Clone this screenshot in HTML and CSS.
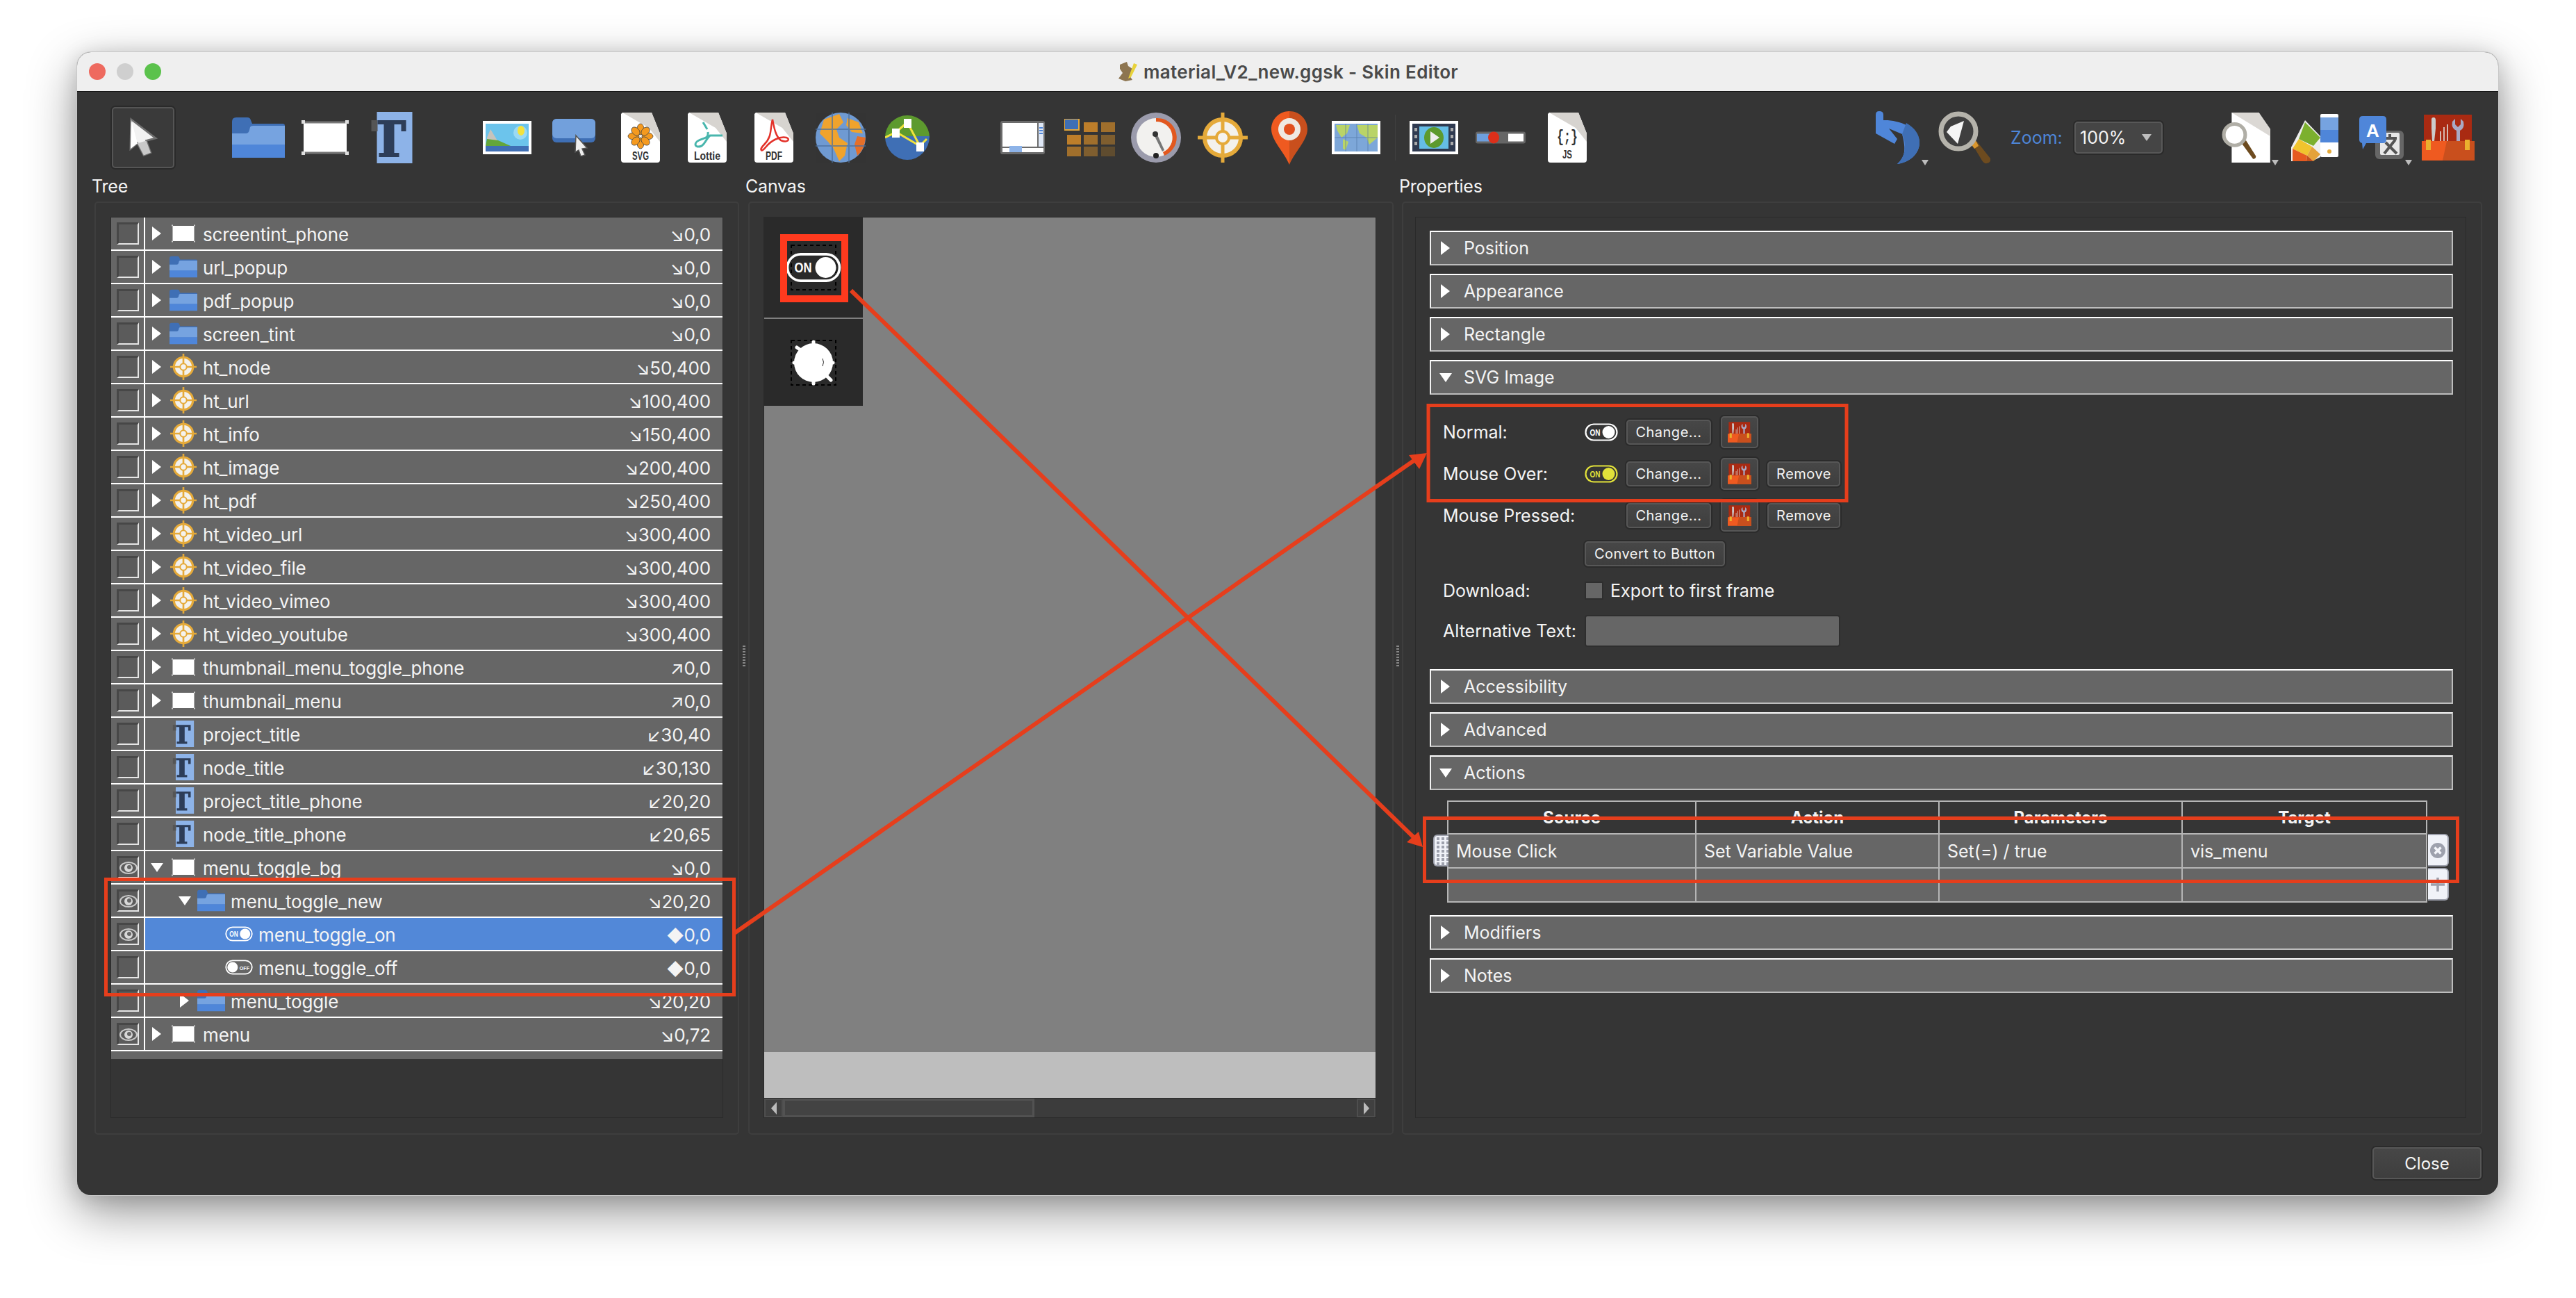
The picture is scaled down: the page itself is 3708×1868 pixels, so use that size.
FILE: index.html
```html
<!DOCTYPE html>
<html lang="en">
<head>
<meta charset="utf-8">
<title>material_V2_new.ggsk - Skin Editor</title>
<link rel="stylesheet" href="styles.css">
</head>
<body>
<svg class="defs" width="0" height="0" aria-hidden="true">
  <defs>
    <symbol id="arrow" viewBox="-3 -3 48 64"><path d="M2 0 L41 30 L26 34 L33 53 L22 57 L12 38 L1 47 Z" fill="#f2f2f2" stroke="#6f6f6f" stroke-width="3"/><path d="M2 0 L12 38 L1 47 Z" fill="#fff"/><path d="M12 38 L22 57 L33 53 L26 34 Z" fill="#c9c9c9"/></symbol>
    <symbol id="folder" viewBox="0 0 76 58"><path d="M0 6 Q0 0 6 0 H22 Q26 0 27 4 L29 9 H73 Q76 9 76 12 V40 H0 Z" fill="#3f6fb5"/><path d="M0 23 H20 Q24 23 25 18 L26 14 Q27 12 30 12 H76 V40 H0 Z" fill="#76a3e0"/><rect y="39" width="76" height="19" fill="#4f86d9"/></symbol>
    <symbol id="rect" viewBox="-6 -5 80 60"><rect x="3" y="3" width="62" height="44" rx="2" fill="#fff"/><path d="M0 0H4V4H0ZM64 0H68V4H64ZM0 46H4V50H0ZM64 46H68V50H64Z" fill="#cfcfcf"/></symbol>
    <symbol id="rect-tall" viewBox="0 0 68 50"><rect x="3" y="2" width="62" height="46" fill="#fff"/><path d="M3 3H65M3 47H65" stroke="#777" stroke-width="3"/><path d="M0 0H5V5H0ZM63 0H68V5H63ZM0 45H5V50H0ZM63 45H68V50H63Z" fill="#ddd"/></symbol>
    <symbol id="text-t" viewBox="0 0 59 74"><rect x="8" width="51" height="74" fill="#8db3e8"/><rect y="12" width="9" height="16" fill="#555"/><path d="M9 12H50V28H43V18H33V59H40V65H11V59H18V18H9Z" fill="#2d3d58"/></symbol>
    <symbol id="picture" viewBox="0 0 70 48"><rect width="70" height="48" fill="#fff"/><rect x="4" y="4" width="62" height="40" fill="#6cc4ec"/><circle cx="54" cy="17" r="10" fill="#9ad9f4"/><ellipse cx="55" cy="14" rx="5" ry="7" fill="#f4e23c"/><path d="M6 24 L11 12 L22 30 L32 36 L6 36Z" fill="#c7c3bc"/><path d="M6 26 L22 28 L40 36 H4Z" fill="#63a63b"/><rect x="4" y="36" width="62" height="8" fill="#3f6fb5"/></symbol>
    <symbol id="hoverbtn" viewBox="0 0 62 54"><rect y="0" width="62" height="34" rx="6" fill="#3f6fb5"/><rect y="0" width="62" height="28" rx="6" fill="#72a0dc"/><path d="M34 24 L50 42 L43 43 L47 52 L41 54 L38 45 L33 48Z" fill="#eee" stroke="#555" stroke-width="1.5"/></symbol>
    <symbol id="doc" viewBox="0 0 56 72"><path d="M2 0 H44 L56 30 V68 Q56 72 52 72 H4 Q0 72 0 68 V2Z" fill="#fff"/><path d="M2 0H44L56 30V42L40 22Z" fill="#d7d4d0"/></symbol>
    <symbol id="globe" viewBox="0 0 72 72"><circle cx="36" cy="36" r="36" fill="#6f9ad2"/><path d="M12 10 L34 2 L40 14 L30 24 L34 36 L46 44 L42 62 L34 70 L26 52 L18 42 L6 30Z" fill="#f0a32e"/><path d="M46 8 L62 14 L68 30 L52 28 L44 18Z" fill="#f0a32e"/><path d="M60 34 L72 36 Q70 54 60 62 L56 46Z" fill="#e5702a"/><path d="M0 24H72M0 48H72M24 0V72M48 0V72" stroke="#4a6f9f" stroke-width="2" opacity=".7"/></symbol>
    <symbol id="net" viewBox="0 0 64 64"><path d="M32 0 A32 32 0 0 1 64 32 L0 32 A32 32 0 0 1 32 0Z" fill="#5d9a2e"/><path d="M0 30 H64 A32 34 0 0 1 0 30Z" fill="#3f6fb5"/><path d="M32 10 L16 24 L50 44 M32 10 L50 44 M16 24 L0 32 M50 44 L60 34" stroke="#f0e23c" stroke-width="3" fill="none"/><rect x="27" y="5" width="11" height="13" fill="#fff"/><rect x="10" y="19" width="11" height="13" fill="#fff"/><rect x="45" y="39" width="11" height="13" fill="#fff"/></symbol>
    <symbol id="panel" viewBox="0 0 64 48"><rect width="64" height="48" rx="3" fill="#6b6b6b"/><rect x="3" y="3" width="50" height="34" fill="#fff"/><rect x="55" y="3" width="7" height="34" fill="#dfe8f6"/><path d="M56 10H61M56 14H61M56 18H61" stroke="#4f86d9" stroke-width="2"/><rect x="3" y="39" width="59" height="6" fill="#fff"/><rect x="13" y="36" width="18" height="9" fill="#8db3e8"/></symbol>
    <symbol id="grid" viewBox="0 0 73 54"><rect x="0" y="0" width="21" height="16" fill="#3f6fb5" stroke="#e7a93a" stroke-width="2"/><rect x="28" y="5" width="20" height="14" fill="#bd7e2a"/><rect x="53" y="5" width="20" height="14" fill="#a06f2c"/><rect x="4" y="23" width="20" height="14" fill="#bd7e2a"/><rect x="28" y="23" width="20" height="14" fill="#a06f2c"/><rect x="53" y="23" width="20" height="14" fill="#7f5e2f"/><rect x="4" y="40" width="20" height="14" fill="#a06f2c"/><rect x="28" y="40" width="20" height="14" fill="#7f5e2f"/><rect x="53" y="40" width="20" height="14" fill="#5f4c2f"/></symbol>
    <symbol id="gauge" viewBox="0 0 72 72"><circle cx="36" cy="36" r="36" fill="#9b9bac"/><circle cx="36" cy="36" r="28" fill="#f2f1ef"/><path d="M36 8 A28 28 0 0 1 48 62 L46 57 A23 23 0 0 0 36 13Z" fill="#e2581f"/><path d="M33 32 L37 30 L48 54 L45 56Z" fill="#777"/><circle cx="35" cy="31" r="4" fill="#333"/><circle cx="36" cy="62" r="4" fill="#222"/></symbol>
    <symbol id="hotspot" viewBox="0 0 72 72"><circle cx="36" cy="36" r="26" fill="#f3f1ec" stroke="#e5aa3a" stroke-width="6"/><path d="M36 0V72M0 36H72" stroke="#e5aa3a" stroke-width="5"/><circle cx="36" cy="36" r="9" fill="#f5f3ee" stroke="#e5aa3a" stroke-width="4"/></symbol>
    <symbol id="pin" viewBox="0 0 52 77"><path d="M26 0 C12 0 0 11 0 26 C0 42 18 58 26 77 Z" fill="#ef5a20"/><path d="M26 0 C40 0 52 11 52 26 C52 42 34 58 26 77 Z" fill="#c94f1d"/><circle cx="26" cy="26" r="16" fill="#efe9e2"/><circle cx="26" cy="26" r="8" fill="#e2501e"/></symbol>
    <symbol id="map" viewBox="0 0 70 48"><rect width="70" height="48" fill="#fff"/><rect x="4" y="4" width="62" height="40" fill="#7da7d9"/><path d="M6 6 H26 L22 18 L14 24 L8 14Z M16 26 L24 30 L20 42 L16 40Z M36 6 H66 V24 L54 34 L50 24 L40 18Z" fill="#b9d468"/><path d="M4 24H66M20 4V44M36 4V44M52 4V44" stroke="#4a6f9f" stroke-width="1" opacity=".6"/></symbol>
    <symbol id="video" viewBox="0 0 70 48"><rect width="70" height="48" fill="#fff"/><rect x="4" y="4" width="62" height="40" fill="#2f3a50"/><rect x="14" y="8" width="42" height="32" fill="#65bde5"/><ellipse cx="35" cy="24" rx="14" ry="15" fill="#5d9a2e"/><path d="M30 15 L43 24 L30 33Z" fill="#eee"/><path d="M9 10V15M9 20V25M9 30V35M61 10V15M61 20V25M61 30V35" stroke="#aaa" stroke-width="4"/></symbol>
    <symbol id="slider" viewBox="0 0 72 17"><rect width="72" height="17" rx="3" fill="#666"/><rect x="2" y="3" width="20" height="11" fill="#6e9fdd"/><rect x="47" y="3" width="22" height="11" fill="#fff"/><ellipse cx="26" cy="8.500" rx="8" ry="8.500" fill="#dc2f1a"/></symbol>
    <symbol id="undo" viewBox="0 0 64 76"><path d="M0 5 Q0 0 5 0 Q11 0 11 5 L11 13 C30 12 63 22 63 45 C63 62 48 74 31 76 C42 66 44 56 38 33 L19 25 L31 40 L27 47 L0 32Z" fill="#4f86d9"/><path d="M44 17 C56 24 63 33 63 45 C63 62 48 74 31 76 C42 66 46 50 38 33Z" fill="#3f6fb5"/></symbol>
    <symbol id="lens" viewBox="0 0 76 76"><path d="M48 46 L56 44 L75 68 Q76 74 70 75 Q66 76 63 71Z" fill="#6d4b1f"/><path d="M46 46 L54 42 L58 50 L52 54Z" fill="#d9962d"/><circle cx="29" cy="29" r="25" fill="#3f3f3f" stroke="#b5b3ab" stroke-width="7"/><path d="M37 14 L28 47 L12 30 L18 22Z" fill="#f5f5f5"/></symbol>
    <symbol id="docsearch" viewBox="0 0 74 72"><path d="M14 1 H52 L68 24 V71 H14 Z" fill="#fff"/><path d="M14 1H52L68 24V34Z" fill="#dbd8d4"/><path d="M28 44 L34 40 L48 62 Q48 66 44 66Z" fill="#6d4b1f"/><circle cx="18" cy="32" r="15" fill="#fff" stroke="#b0aea6" stroke-width="5"/></symbol>
    <symbol id="palette" viewBox="0 0 68 68"><rect x="42" y="0" width="26" height="62" rx="2" fill="#fff"/><rect x="42" y="5" width="26" height="18" fill="#76a3e0"/><rect x="42" y="23" width="26" height="18" fill="#4f86d9"/><circle cx="55" cy="54" r="3" fill="#e5aa3a"/><path d="M20 9 L42 32 L42 62 L30 68 L0 68 L0 48Z" fill="#eee"/><path d="M20 12 L42 34 L32 46 L11 36Z" fill="#7cb02e"/><path d="M11 36 L30 47 L23 60 L2 50Z" fill="#f0c42e"/><path d="M30 47 L42 58 L32 68 L23 60Z" fill="#e5a23a"/><path d="M2 50 L23 60 L22 68 H2Z" fill="#e65a20"/><path d="M23 60 L32 68 H22Z" fill="#c14f1d"/></symbol>
    <symbol id="translate" viewBox="0 0 64 62"><rect x="23" y="21" width="41" height="41" rx="6" fill="#666"/><rect x="30" y="24" width="28" height="32" rx="2" fill="#e8e8e8"/><path d="M34 32H54M44 26V33M36 54L52 34M38 38L54 54" stroke="#555" stroke-width="4" fill="none"/><path d="M5 0H34Q39 0 39 5V34Q39 39 34 39H10L5 48L4 39Q0 38 0 34V5Q0 0 5 0Z" fill="#4f86d9"/><text x="19.500" y="30" class="trans-a">A</text></symbol>
    <symbol id="toolbox" viewBox="0 0 76 66"><rect x="3" width="69" height="40" fill="#a92a12"/><path d="M14 7 Q14 4 17 4 Q20 4 20 8 L20 20 L18 38 H15 L14 20Z" fill="#ccc"/><path d="M27 38V24M32 38V18M37 38V14" stroke="#d6b9b0" stroke-width="2"/><path d="M48 6 L48 14 L52 18 L56 14 V6 L60 10 Q62 20 55 23 V38 H50 V23 Q42 20 44 10Z" fill="#a9a9c4"/><rect y="38" width="76" height="28" fill="#ef5a20"/><path d="M36 38H76V66H30Z" fill="#c94f1d"/><rect x="6" y="36" width="7" height="15" fill="#eab02e"/><rect x="62" y="36" width="7" height="15" fill="#eab02e"/></symbol>
    <symbol id="toggle-on" viewBox="0 0 48 26"><rect x="1.500" y="1.500" width="45" height="23" rx="11.500" fill="none" stroke="currentColor" stroke-width="2.200"/><text x="7.500" y="17.500" class="tog-t" textLength="15" lengthAdjust="spacingAndGlyphs">ON</text><circle cx="34.500" cy="13" r="9" fill="currentColor"/></symbol>
    <symbol id="toggle-off" viewBox="0 0 48 26"><rect x="1.500" y="1.500" width="45" height="23" rx="11.500" fill="none" stroke="currentColor" stroke-width="2.200"/><text x="25" y="17.500" class="tog-o" textLength="17" lengthAdjust="spacingAndGlyphs">OFF</text><circle cx="13" cy="13" r="9" fill="currentColor"/></symbol>
    <symbol id="eye" viewBox="0 0 26 18"><ellipse cx="13" cy="9" rx="12" ry="8" fill="none" stroke="#c9c9c9" stroke-width="2"/><circle cx="13" cy="9" r="6" fill="#d8d8d8"/><circle cx="14" cy="8" r="3" fill="#666"/></symbol>
  </defs>
</svg>

<div class="window">
  <header class="titlebar">
    <div class="lights"><span class="light red"></span><span class="light grey"></span><span class="light green"></span></div>
    <div class="title">
      <svg class="title-icon" viewBox="0 0 30 28"><path d="M4 4 L14 0 L16 6 L22 10 L18 20 L22 26 L12 28 L2 24 L8 16 L4 10Z" fill="#8d7550"/><path d="M24 2 L29 4 L20 22 L16 24Z" fill="#e8d23a"/></svg>
      <span>material_V2_new.ggsk - Skin Editor</span>
    </div>
    <div></div>
  </header>

  <div class="toolbar">
    <button class="select-btn"><svg class="sel-ico"><use href="#arrow"/></svg></button>
    <div class="tools g2">
      <span class="tool"><svg class="i76"><use href="#folder"/></svg></span>
      <span class="tool"><svg class="i68"><use href="#rect-tall"/></svg></span>
      <span class="tool"><svg class="i60"><use href="#text-t"/></svg></span>
    </div>
    <div class="tools g3">
      <span class="tool"><svg class="i70"><use href="#picture"/></svg></span>
      <span class="tool"><svg class="i62"><use href="#hoverbtn"/></svg></span>
      <span class="tool"><svg class="idoc" viewBox="0 0 56 72"><use href="#doc" width="56" height="72"/><g class="flower"><ellipse cx="28" cy="24" rx="5" ry="8"/><ellipse cx="28" cy="44" rx="5" ry="8"/><ellipse cx="18" cy="34" rx="8" ry="5"/><ellipse cx="38" cy="34" rx="8" ry="5"/><ellipse cx="21" cy="27" rx="5" ry="7" transform="rotate(-45 21 27)"/><ellipse cx="35" cy="27" rx="5" ry="7" transform="rotate(45 35 27)"/><ellipse cx="21" cy="41" rx="5" ry="7" transform="rotate(45 21 41)"/><ellipse cx="35" cy="41" rx="5" ry="7" transform="rotate(-45 35 41)"/></g><text x="28" y="68" class="doc-t" textLength="24" lengthAdjust="spacingAndGlyphs">SVG</text></svg></span>
      <span class="tool"><svg class="idoc" viewBox="0 0 56 72"><use href="#doc" width="56" height="72"/><path class="lot" d="M22 14 L28 24 M29 28 C30 38 24 36 16 40 C8 44 10 52 20 48 C26 44 26 38 32 33 H50" /><text x="28" y="68" class="doc-t" textLength="38" lengthAdjust="spacingAndGlyphs">Lottie</text></svg></span>
      <span class="tool"><svg class="idoc" viewBox="0 0 56 72"><use href="#doc" width="56" height="72"/><path class="acro" d="M26 10 C22 24 26 34 14 46 C6 54 10 58 16 50 C24 40 36 34 46 36 C52 38 48 44 38 40 C30 34 28 20 26 10Z" /><text x="28" y="68" class="doc-t" textLength="24" lengthAdjust="spacingAndGlyphs">PDF</text></svg></span>
      <span class="tool"><svg class="i72"><use href="#globe"/></svg></span>
      <span class="tool"><svg class="i64"><use href="#net"/></svg></span>
    </div>
    <div class="tools g4">
      <span class="tool"><svg class="i64"><use href="#panel"/></svg></span>
      <span class="tool"><svg class="i73"><use href="#grid"/></svg></span>
      <span class="tool"><svg class="i72"><use href="#gauge"/></svg></span>
      <span class="tool"><svg class="i72"><use href="#hotspot"/></svg></span>
      <span class="tool"><svg class="ipin"><use href="#pin"/></svg></span>
      <span class="tool"><svg class="i70"><use href="#map"/></svg></span>
      <span class="tool-sep"></span>
      <span class="tool"><svg class="i70"><use href="#video"/></svg></span>
      <span class="tool"><svg class="i72"><use href="#slider"/></svg></span>
      <span class="tool"><svg class="idoc" viewBox="0 0 56 72"><use href="#doc" width="56" height="72"/><text x="28" y="42" class="js-b" textLength="30" lengthAdjust="spacingAndGlyphs">{;}</text><text x="28" y="66" class="doc-t" textLength="14" lengthAdjust="spacingAndGlyphs">JS</text></svg></span>
    </div>
    <div class="tools g5">
      <span class="tool has-menu"><svg class="iundo"><use href="#undo"/></svg></span>
      <span class="tool"><svg class="ilens"><use href="#lens"/></svg></span>
    </div>
    <span class="zoom-label">Zoom:</span>
    <div class="combo"><span>100%</span><i class="combo-arrow"></i></div>
    <div class="tools g6">
      <span class="tool has-menu"><svg class="ilens"><use href="#docsearch"/></svg></span>
      <span class="tool"><svg class="i68"><use href="#palette"/></svg></span>
      <span class="tool has-menu"><svg class="itrans"><use href="#translate"/></svg></span>
      <span class="tool"><svg class="ilens"><use href="#toolbox"/></svg></span>
    </div>
  </div>

  <div class="panels">
    <section class="panel">
      <h2 class="panel-title">Tree</h2>
      <div class="group">
        <div class="frame tree">
          <div class="row"><span class="vis"><span class="check"></span></span><span class="name"><i class="tri"></i><svg class="ti"><use href="#rect"/></svg><span class="label">screentint_phone</span><span class="val">↘0,0</span></span></div>
          <div class="row"><span class="vis"><span class="check"></span></span><span class="name"><i class="tri"></i><svg class="ti"><use href="#folder"/></svg><span class="label">url_popup</span><span class="val">↘0,0</span></span></div>
          <div class="row"><span class="vis"><span class="check"></span></span><span class="name"><i class="tri"></i><svg class="ti"><use href="#folder"/></svg><span class="label">pdf_popup</span><span class="val">↘0,0</span></span></div>
          <div class="row"><span class="vis"><span class="check"></span></span><span class="name"><i class="tri"></i><svg class="ti"><use href="#folder"/></svg><span class="label">screen_tint</span><span class="val">↘0,0</span></span></div>
          <div class="row"><span class="vis"><span class="check"></span></span><span class="name"><i class="tri"></i><svg class="ti"><use href="#hotspot"/></svg><span class="label">ht_node</span><span class="val">↘50,400</span></span></div>
          <div class="row"><span class="vis"><span class="check"></span></span><span class="name"><i class="tri"></i><svg class="ti"><use href="#hotspot"/></svg><span class="label">ht_url</span><span class="val">↘100,400</span></span></div>
          <div class="row"><span class="vis"><span class="check"></span></span><span class="name"><i class="tri"></i><svg class="ti"><use href="#hotspot"/></svg><span class="label">ht_info</span><span class="val">↘150,400</span></span></div>
          <div class="row"><span class="vis"><span class="check"></span></span><span class="name"><i class="tri"></i><svg class="ti"><use href="#hotspot"/></svg><span class="label">ht_image</span><span class="val">↘200,400</span></span></div>
          <div class="row"><span class="vis"><span class="check"></span></span><span class="name"><i class="tri"></i><svg class="ti"><use href="#hotspot"/></svg><span class="label">ht_pdf</span><span class="val">↘250,400</span></span></div>
          <div class="row"><span class="vis"><span class="check"></span></span><span class="name"><i class="tri"></i><svg class="ti"><use href="#hotspot"/></svg><span class="label">ht_video_url</span><span class="val">↘300,400</span></span></div>
          <div class="row"><span class="vis"><span class="check"></span></span><span class="name"><i class="tri"></i><svg class="ti"><use href="#hotspot"/></svg><span class="label">ht_video_file</span><span class="val">↘300,400</span></span></div>
          <div class="row"><span class="vis"><span class="check"></span></span><span class="name"><i class="tri"></i><svg class="ti"><use href="#hotspot"/></svg><span class="label">ht_video_vimeo</span><span class="val">↘300,400</span></span></div>
          <div class="row"><span class="vis"><span class="check"></span></span><span class="name"><i class="tri"></i><svg class="ti"><use href="#hotspot"/></svg><span class="label">ht_video_youtube</span><span class="val">↘300,400</span></span></div>
          <div class="row"><span class="vis"><span class="check"></span></span><span class="name"><i class="tri"></i><svg class="ti"><use href="#rect"/></svg><span class="label">thumbnail_menu_toggle_phone</span><span class="val">↗0,0</span></span></div>
          <div class="row"><span class="vis"><span class="check"></span></span><span class="name"><i class="tri"></i><svg class="ti"><use href="#rect"/></svg><span class="label">thumbnail_menu</span><span class="val">↗0,0</span></span></div>
          <div class="row"><span class="vis"><span class="check"></span></span><span class="name"><i class="tri none"></i><svg class="ti"><use href="#text-t"/></svg><span class="label">project_title</span><span class="val">↙30,40</span></span></div>
          <div class="row"><span class="vis"><span class="check"></span></span><span class="name"><i class="tri none"></i><svg class="ti"><use href="#text-t"/></svg><span class="label">node_title</span><span class="val">↙30,130</span></span></div>
          <div class="row"><span class="vis"><span class="check"></span></span><span class="name"><i class="tri none"></i><svg class="ti"><use href="#text-t"/></svg><span class="label">project_title_phone</span><span class="val">↙20,20</span></span></div>
          <div class="row"><span class="vis"><span class="check"></span></span><span class="name"><i class="tri none"></i><svg class="ti"><use href="#text-t"/></svg><span class="label">node_title_phone</span><span class="val">↙20,65</span></span></div>
          <div class="row"><span class="vis"><span class="check"><svg class="eye"><use href="#eye"/></svg></span></span><span class="name"><i class="tri open"></i><svg class="ti"><use href="#rect"/></svg><span class="label">menu_toggle_bg</span><span class="val">↘0,0</span></span></div>
          <div class="row"><span class="vis"><span class="check"><svg class="eye"><use href="#eye"/></svg></span></span><span class="name d1"><i class="tri open"></i><svg class="ti"><use href="#folder"/></svg><span class="label">menu_toggle_new</span><span class="val">↘20,20</span></span></div>
          <div class="row selected"><span class="vis"><span class="check"><svg class="eye"><use href="#eye"/></svg></span></span><span class="name d2"><i class="tri none"></i><svg class="ti white"><use href="#toggle-on"/></svg><span class="label">menu_toggle_on</span><span class="val"><span class="diamond">◆</span>0,0</span></span></div>
          <div class="row"><span class="vis"><span class="check"></span></span><span class="name d2"><i class="tri none"></i><svg class="ti white"><use href="#toggle-off"/></svg><span class="label">menu_toggle_off</span><span class="val"><span class="diamond">◆</span>0,0</span></span></div>
          <div class="row"><span class="vis"><span class="check"></span></span><span class="name d1"><i class="tri"></i><svg class="ti"><use href="#folder"/></svg><span class="label">menu_toggle</span><span class="val">↘20,20</span></span></div>
          <div class="row"><span class="vis"><span class="check"><svg class="eye"><use href="#eye"/></svg></span></span><span class="name"><i class="tri"></i><svg class="ti"><use href="#rect"/></svg><span class="label">menu</span><span class="val">↘0,72</span></span></div>
          <div class="tree-fill"></div>
        </div>
      </div>
    </section>

    <div class="splitter"><span class="grip"></span></div>

    <section class="panel">
      <h2 class="panel-title">Canvas</h2>
      <div class="group canvas-group">
        <div class="frame stage-frame">
          <div class="stage">
            <div class="strip">
              <div class="strip-cell first">
                <svg class="stage-ico" viewBox="0 0 82 66"><rect class="dash" x="9" y="1" width="64" height="64"/><use href="#toggle-on" x="1" y="11" width="80" height="44"/></svg>
              </div>
              <div class="strip-cell second">
                <svg class="stage-ico" viewBox="0 0 82 66"><rect class="dash" x="9" y="1" width="64" height="64"/><circle cx="41" cy="33" r="28" fill="#fff"/><path d="M41 3V8M41 58V63M13 33H16M66 33H69M17 11L23 15M60 52L66 58" stroke="#fff" stroke-width="5" stroke-linecap="round"/><path d="M54 27Q57 32 54 38" stroke="#222" stroke-width="1" fill="none"/></svg>
              </div>
            </div>
          </div>
          <div class="stage-bottom"></div>
          <div class="hscroll">
            <span class="sb-btn"><i class="sb-l"></i></span>
            <span class="sb-thumb"></span>
            <span class="sb-rest"></span>
            <span class="sb-btn"><i class="sb-r"></i></span>
          </div>
        </div>
      </div>
    </section>

    <div class="splitter"><span class="grip"></span></div>

    <section class="panel">
      <h2 class="panel-title">Properties</h2>
      <div class="group props-group">
        <div class="frame props">
          <div class="sec"><i class="tri"></i><span>Position</span></div>
          <div class="sec"><i class="tri"></i><span>Appearance</span></div>
          <div class="sec"><i class="tri"></i><span>Rectangle</span></div>
          <div class="sec"><i class="tri open"></i><span>SVG Image</span></div>
          <div class="svg-body">
            <div class="prop-row">
              <span class="prop-label">Normal:</span>
              <span class="thumb"><svg class="thumb-ico white"><use href="#toggle-on"/></svg></span>
              <button class="btn change">Change...</button>
              <button class="btn icon-btn"><svg class="tb-ico"><use href="#toolbox"/></svg></button>
            </div>
            <div class="prop-row">
              <span class="prop-label">Mouse Over:</span>
              <span class="thumb"><svg class="thumb-ico yellow"><use href="#toggle-on"/></svg></span>
              <button class="btn change">Change...</button>
              <button class="btn icon-btn"><svg class="tb-ico"><use href="#toolbox"/></svg></button>
              <button class="btn remove">Remove</button>
            </div>
            <div class="prop-row">
              <span class="prop-label">Mouse Pressed:</span>
              <span class="thumb"></span>
              <button class="btn change">Change...</button>
              <button class="btn icon-btn"><svg class="tb-ico"><use href="#toolbox"/></svg></button>
              <button class="btn remove">Remove</button>
            </div>
            <div class="prop-row convert-row">
              <span class="prop-label"></span>
              <button class="btn convert">Convert to Button</button>
            </div>
            <div class="prop-row download-row">
              <span class="prop-label">Download:</span>
              <span class="box"></span>
              <span class="box-text">Export to first frame</span>
            </div>
            <div class="prop-row">
              <span class="prop-label">Alternative Text:</span>
              <span class="input"></span>
            </div>
          </div>
          <div class="sec"><i class="tri"></i><span>Accessibility</span></div>
          <div class="sec"><i class="tri"></i><span>Advanced</span></div>
          <div class="sec"><i class="tri open"></i><span>Actions</span></div>
          <div class="actions-body">
            <div class="table-wrap">
              <table class="actions">
                <thead><tr><th>Source</th><th>Action</th><th>Parameters</th><th>Target</th></tr></thead>
                <tbody>
                  <tr><td>Mouse Click</td><td>Set Variable Value</td><td>Set(=) / true</td><td>vis_menu</td></tr>
                  <tr class="empty"><td></td><td></td><td></td><td></td></tr>
                </tbody>
              </table>
              <span class="drag-handle"></span>
              <span class="row-btn del"><svg class="del-ico" viewBox="0 0 24 24"><circle cx="12" cy="12" r="11" fill="#9ea1ad"/><path d="M7.500 7.500L16.500 16.500M16.500 7.500L7.500 16.500" stroke="#f4f5fa" stroke-width="3.500"/></svg></span>
              <span class="row-btn add"><svg class="del-ico" viewBox="0 0 24 24"><path d="M12 2V22M2 12H22" stroke="#9ea1ad" stroke-width="3.500"/></svg></span>
            </div>
          </div>
          <div class="sec"><i class="tri"></i><span>Modifiers</span></div>
          <div class="sec"><i class="tri"></i><span>Notes</span></div>
        </div>
      </div>
    </section>
  </div>

  <footer class="footer"><button class="btn close">Close</button></footer>
</div>

<svg class="notes" viewBox="0 0 3708 1868" aria-hidden="true">
  <rect class="note-thick" x="1128" y="342" width="88" height="88"/>
  <rect class="note" x="152.500" y="1265.500" width="904" height="166"/>
  <rect class="note" x="2056" y="583.500" width="602" height="137"/>
  <rect class="note" x="2050.500" y="1177.500" width="1487" height="91"/>
  <line class="note-line" x1="1225" y1="418" x2="2037" y2="1207"/>
  <path class="note-head" d="M2048 1219 L2025 1212 L2042 1197Z"/>
  <line class="note-line" x1="1057" y1="1343" x2="2035" y2="663"/>
  <path class="note-head" d="M2054 652 L2028 655 L2043 675Z"/>
</svg>
</body>
</html>
```

FILE: styles.css
```css
* { box-sizing: border-box; }
html, body { margin: 0; padding: 0; }
body {
  width: 3708px;
  height: 1868px;
  background: #fff;
  overflow: hidden;
  padding: 75px 112px 0 111px;
  position: relative;
  font-family: Inter, "Liberation Sans", sans-serif;
  color: #f4f4f4;
}
.defs { position: absolute; }
button { font-family: inherit; color: inherit; padding: 0; }

.window {
  width: 3485px;
  height: 1645px;
  background: #353535;
  border-radius: 20px;
  box-shadow: 0 0 0 1px #c8c8c8, 0 24px 70px rgba(0,0,0,.42), 0 4px 30px rgba(0,0,0,.14);
  display: flex;
  flex-direction: column;
  overflow: hidden;
}

/* title bar */
.titlebar {
  height: 57px;
  flex: none;
  background: #efefef;
  border-bottom: 1px solid #111;
  display: grid;
  grid-template-columns: 1fr auto 1fr;
  align-items: center;
}
.lights { display: flex; gap: 16px; padding-left: 17px; }
.light { width: 24px; height: 24px; border-radius: 50%; }
.red { background: #ee6a5f; }
.grey { background: #cfcfcf; }
.green { background: #5bc24c; }
.title { display: flex; align-items: center; gap: 8px; color: #4a4a4a; font-size: 26px; font-weight: 600; letter-spacing: .35px; white-space: nowrap; }
.title-icon { width: 30px; height: 28px; }

/* toolbar */
.toolbar { height: 122px; flex: none; padding: 10px 0 0 50px; display: flex; align-items: center; }
.select-btn { width: 90px; height: 88px; background: #3a3a3a; border: 2px solid #555; border-radius: 5px; box-shadow: 0 0 0 2px #2a2a2a; display: flex; align-items: center; justify-content: center; }
.sel-ico { width: 44px; height: 58px; }
.tools { display: flex; align-items: center; }
.g2 { margin-left: 73px; }
.g3 { margin-left: 70px; }
.g4 { margin-left: 70px; }
.g5 { margin-left: 380px; }
.g6 { margin-left: 75px; }
.tool { width: 96px; height: 80px; display: flex; align-items: center; justify-content: center; position: relative; }
.tool-sep { width: 16px; height: 66px; position: relative; }
.tool-sep::before { content: ""; position: absolute; left: 8px; top: 0; bottom: 0; width: 1px; background: #3f3f3f; }
.has-menu::after { content: ""; position: absolute; right: 4px; bottom: 0; border-top: 8px solid #bdbdbd; border-left: 5px solid transparent; border-right: 5px solid transparent; }
.i60 { width: 60px; height: 74px; }
.i62 { width: 62px; height: 54px; }
.i64 { width: 64px; height: 64px; }
.i68 { width: 68px; height: 68px; }
.i70 { width: 70px; height: 48px; }
.i72 { width: 72px; height: 72px; }
.i73 { width: 73px; height: 54px; }
.i76 { width: 76px; height: 58px; }
.idoc { width: 56px; height: 72px; }
.ipin { width: 52px; height: 77px; }
.iundo { width: 64px; height: 76px; }
.ilens { width: 76px; height: 76px; }
.itrans { width: 64px; height: 62px; }
.flower ellipse { fill: #f59a1f; stroke: #444; stroke-width: .8; }
.lot { fill: none; stroke: #49b6ad; stroke-width: 3; }
.acro { fill: none; stroke: #e3322a; stroke-width: 2.500; }
.doc-t { font: 700 17px "Liberation Sans", sans-serif; fill: #333; text-anchor: middle; }
.js-b { font: 700 24px "Liberation Mono", monospace; fill: #333; text-anchor: middle; }
.trans-a { font: 700 26px "Liberation Sans", sans-serif; fill: #fff; text-anchor: middle; }
.zoom-label { margin-left: 18px; width: 92px; color: #4e86d8; font-size: 25px; }
.combo { width: 127px; height: 46px; background: #454545; border: 2px solid #585858; border-radius: 5px; box-shadow: 0 0 0 2px #2a2a2a; display: flex; align-items: center; justify-content: space-between; padding: 0 14px 0 6px; font-size: 25px; }
.combo-arrow { border-top: 10px solid #bdbdbd; border-left: 7px solid transparent; border-right: 7px solid transparent; }

/* panels */
.panels { display: grid; grid-template-columns: 928px 13px 929px 12px 1555px; padding-left: 25px; flex: none; }
.panel { display: flex; flex-direction: column; }
.panel-title { margin: 0 0 0 -4px; height: 28px; line-height: 28px; font-size: 25px; font-weight: 400; letter-spacing: -.2px; }
.group { margin-top: 8px; height: 1343px; border: 2px solid #3e3e3e; border-radius: 5px; padding: 21px 22px 23px; }
.canvas-group { padding-left: 21px; padding-right: 24px; }
.props-group { padding-left: 18px; padding-right: 22px; }
.frame { height: 100%; background: #353535; box-shadow: 0 0 0 1px #2a2a2a; }
.splitter { display: flex; align-items: center; justify-content: center; padding-bottom: 34px; padding-top: 36px; }
.grip { width: 4px; height: 32px; background: repeating-linear-gradient(to bottom, #888 0 2px, transparent 2px 4px); }

/* tree */
.row { height: 48px; display: flex; background: #666; border-bottom: 2px solid #fff; }
.vis { width: 49px; flex: none; border-right: 2px solid #fff; padding-left: 8px; display: flex; align-items: center; }
.check { width: 32px; height: 32px; background: #5b5b5b; border-style: solid; border-width: 3px 2px 2px 3px; border-color: #474747 #e6e6e6 #e6e6e6 #474747; display: flex; align-items: center; justify-content: center; }
.eye { width: 26px; height: 18px; }
.name { flex: 1; display: flex; align-items: center; padding-right: 17px; min-width: 0; }
.d1 { padding-left: 40px; }
.d2 { padding-left: 80px; }
.selected .name { background: #5288d8; }
.tri { width: 19px; margin-left: 7px; height: 20px; flex: none; display: flex; align-items: center; justify-content: center; }
.tri::before { content: ""; border-left: 13px solid #fff; border-top: 10px solid transparent; border-bottom: 10px solid transparent; }
.tri.open::before { border-left: 9px solid transparent; border-right: 9px solid transparent; border-top: 13px solid #fff; border-bottom: 0; }
.tri.none::before { display: none; }
.ti { width: 40px; height: 38px; margin-left: 9px; flex: none; }
.white { color: #fff; }
.yellow { color: #e2e23a; }
.stage-ico { color: #fff; }
.tog-t { font: 700 12px "Liberation Sans", sans-serif; fill: currentColor; }
.tog-o { font: 700 9px "Liberation Sans", sans-serif; fill: currentColor; }
.label { margin-left: 8px; padding-top: 2px; font-size: 26px; white-space: nowrap; flex: 1; letter-spacing: -.15px; }
.val { padding-top: 2px; font-size: 26px; white-space: nowrap; letter-spacing: -.15px; }
.diamond { font-size: 24px; }
.tree-fill { height: 11px; background: #666; }

/* canvas */
.stage-frame { display: flex; flex-direction: column; }
.stage { flex: 1; background: #808080; }
.strip { width: 142px; background: #2a2a2a; }
.strip-cell { display: flex; align-items: center; justify-content: center; }
.first { height: 144px; }
.second { height: 127px; border-top: 2px solid #808080; }
.stage-ico { width: 82px; height: 66px; }
.dash { fill: none; stroke: #000; stroke-width: 2; stroke-dasharray: 5 4; }
.stage-bottom { height: 66px; background: #bebebe; }
.hscroll { height: 28px; background: #3c3c3c; display: flex; border-top: 1px solid #2a2a2a; }
.sb-btn { width: 27px; background: #404040; border: 2px solid #4e4e4e; display: flex; align-items: center; justify-content: center; }
.sb-thumb { width: 362px; background: #434343; border: 3px solid #525252; }
.sb-rest { flex: 1; }
.sb-l { border-right: 8px solid #bbb; border-top: 9px solid transparent; border-bottom: 9px solid transparent; }
.sb-r { border-left: 8px solid #bbb; border-top: 9px solid transparent; border-bottom: 9px solid transparent; }

/* properties */
.props { padding: 19px 18px 0 20px; display: flex; flex-direction: column; gap: 12px; }
.sec { height: 50px; flex: none; background: #666; border-style: solid; border-width: 2px; border-color: #fff #bdbdbd #bdbdbd #f2f2f2; display: flex; align-items: center; font-size: 25px; }
.sec .tri { margin-left: 11px; }
.sec span { margin-left: 17px; }
.svg-body { height: 371px; flex: none; padding: 19px 0 0 19px; display: flex; flex-direction: column; gap: 14px; }
.prop-row { height: 46px; display: flex; align-items: center; flex: none; }
.prop-row.convert-row { height: 36px; }
.prop-row.download-row { height: 42px; }
.prop-label { width: 204px; flex: none; font-size: 25px; white-space: nowrap; }
.thumb { width: 60px; flex: none; display: flex; }
.thumb-ico { width: 48px; height: 26px; }
.btn { background: linear-gradient(#474747, #3e3e3e); border: 2px solid #575757; border-radius: 5px; box-shadow: 0 0 0 2px #2b2b2b; font-size: 20px; letter-spacing: .5px; display: inline-flex; align-items: center; justify-content: center; white-space: nowrap; flex: none; }
.change { width: 122px; height: 36px; }
.icon-btn { width: 54px; height: 46px; margin-left: 14px; }
.remove { width: 105px; height: 36px; margin-left: 13px; }
.convert { width: 202px; height: 36px; }
.tb-ico { width: 34px; height: 30px; }
.box { width: 27px; height: 26px; background: #666; border: 2px solid #2e2e2e; flex: none; }
.box-text { margin-left: 10px; font-size: 25px; }
.input { width: 368px; height: 46px; background: #666; border: 2px solid #2e2e2e; border-radius: 4px; }
.actions-body { height: 156px; flex: none; padding: 3px 0 0 25px; }
.table-wrap { position: relative; width: 1411px; }
.actions { width: 1411px; border-collapse: collapse; table-layout: fixed; font-size: 25px; }
.actions th, .actions td { border: 2px solid #b5b5b5; padding: 0 0 0 11px; font-weight: 400; text-align: left; }
.actions th { height: 47px; text-align: center; font-weight: 700; padding: 0; font-size: 24px; }
.actions th:nth-child(1), .actions td:nth-child(1) { width: 357px; }
.actions th:nth-child(2), .actions td:nth-child(2) { width: 350px; }
.actions th:nth-child(3), .actions td:nth-child(3) { width: 350px; }
.actions td { height: 49px; background: #666; }
.drag-handle { position: absolute; left: -20px; top: 49px; width: 22px; height: 46px; background-color: #f0f2f8; border: 2px solid #9ea1ad; border-right: 0; border-radius: 6px 0 0 6px; background-image: repeating-linear-gradient(to bottom, #f0f2f8 0 2px, transparent 2px 6px), repeating-linear-gradient(to right, #f0f2f8 0 3px, #9ea1ad 3px 7px); }
.row-btn { position: absolute; left: 1412px; width: 30px; height: 47px; background: #f0f2f8; border: 2px solid #9ea1ad; border-left: 0; border-radius: 0 6px 6px 0; display: flex; align-items: center; justify-content: center; }
.del { top: 48px; }
.add { top: 97px; }
.del-ico { width: 24px; height: 24px; }

/* footer */
.footer { flex: 1; display: flex; justify-content: flex-end; align-items: flex-start; padding: 18px 24px 0 0; }
.close { width: 157px; height: 46px; font-size: 24px; letter-spacing: 0; }

/* annotations drawn over the screenshot */
.notes { position: absolute; left: 0; top: 0; width: 3708px; height: 1868px; pointer-events: none; }
.note { fill: none; stroke: #e63e1c; stroke-width: 5; }
.note-thick { fill: none; stroke: #ff3a1e; stroke-width: 10; }
.note-line { stroke: #e63e1c; stroke-width: 6; }
.note-head { fill: #e63e1c; }
```
